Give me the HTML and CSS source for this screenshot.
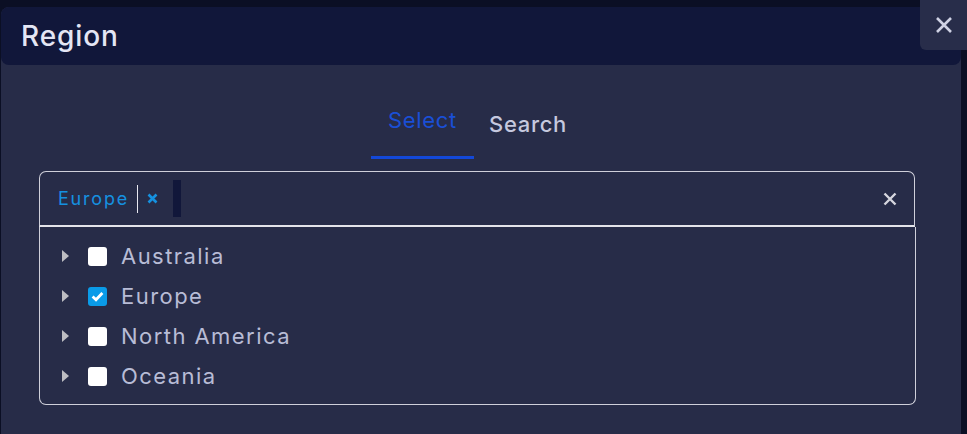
FILE: index.html
```html
<!DOCTYPE html>
<html>
<head>
<meta charset="utf-8">
<link rel="stylesheet" href="styles.css">
</head>
<body>
<div class="modal">
  <div class="modal-header"><h1 class="title">Region</h1></div>
  <div class="tabs">
    <div class="tab tab-active">Select</div>
    <div class="tab">Search</div>
  </div>
  <div class="picker">
    <div class="input">
      <span class="tag">Europe</span>
      <span class="tag-sep"></span>
      <span class="tag-remove">
        <svg width="11" height="11" viewBox="0 0 11 11"><path d="M1.5 1.5L9.5 9.5M9.5 1.5L1.5 9.5" stroke="#1591e0" stroke-width="2.6" stroke-linecap="butt"/></svg>
      </span>
      <span class="cursor"></span>
      <span class="clear">
        <svg width="14" height="14" viewBox="0 0 14 14"><path d="M1.5 1.5L12.5 12.5M12.5 1.5L1.5 12.5" stroke="#d6d6de" stroke-width="2.4"/></svg>
      </span>
    </div>
    <ul class="list">
      <li class="row"><span class="caret"></span><span class="check"></span><span class="label">Australia</span></li>
      <li class="row"><span class="caret"></span><span class="check checked"><svg width="13" height="11" viewBox="0 0 13 11"><path d="M1.6 5.6L5 8.8L11.4 2" stroke="#fff" stroke-width="2.8" fill="none"/></svg></span><span class="label">Europe</span></li>
      <li class="row"><span class="caret"></span><span class="check"></span><span class="label">North America</span></li>
      <li class="row"><span class="caret"></span><span class="check"></span><span class="label">Oceania</span></li>
    </ul>
  </div>
</div>
<button class="close" aria-label="Close">
  <svg width="18" height="18" viewBox="0 0 18 18"><path d="M2 2L16 16M16 2L2 16" stroke="#cfd1e4" stroke-width="2.6"/></svg>
</button>
</body>
</html>
```
FILE: styles.css
```css
html, body {
  margin: 0;
  padding: 0;
  height: 100%;
}
body {
  background: #0b0f24;
  font-family: "Inter", "Open Sans", sans-serif;
  overflow: hidden;
  position: relative;
}
.modal {
  margin: 7px 0 0 1px;
  width: 960px;
  height: 427px;
  background: #272c48;
  border-radius: 8px 8px 0 0;
}
.modal-header {
  height: 58px;
  background: #11173a;
  border-radius: 8px;
  display: flex;
  align-items: center;
  padding-left: 20px;
}
.title {
  margin: 0;
  font-size: 28px;
  font-weight: 500;
  color: #e4e6f4;
  letter-spacing: 0.9px;
}
.tabs {
  display: flex;
  justify-content: center;
  align-items: flex-start;
  height: 94px;
  margin-left: -9px;
}
.tab {
  margin-top: 45px;
  padding: 0 15px;
  font-size: 22px;
  line-height: 28px;
  letter-spacing: 0.7px;
  color: #c5c8de;
  font-weight: 500;
}
.tab-active {
  margin-top: 41px;
  height: 50px;
  padding: 0 17px;
  color: #1a4fd6;
  font-weight: 400;
  border-bottom: 3px solid #1348d8;
}
.picker {
  margin: 12px 0 0 38px;
  width: 876px;
}
.input {
  height: 56px;
  box-sizing: border-box;
  border: 1px solid #cfd0da;
  border-bottom: 2px solid #e4e4ea;
  border-radius: 7px 7px 0 0;
  display: flex;
  align-items: center;
  padding: 0 17px 0 18px;
}
.tag {
  font-size: 18px;
  letter-spacing: 1.8px;
  color: #1591e0;
}
.tag-sep {
  width: 1px;
  height: 28px;
  background: #e8e8f0;
  margin-left: 8px;
}
.tag-remove {
  display: flex;
  margin-left: 9px;
}
.cursor {
  width: 8px;
  height: 37px;
  background: #11173a;
  margin-left: 15px;
}
.clear {
  display: flex;
  margin-left: auto;
}
.list {
  list-style: none;
  margin: 0;
  padding: 9px 0 7px;
  border: 1px solid #cfd0da;
  border-top: none;
  border-radius: 0 0 7px 7px;
  height: 178px;
  box-sizing: border-box;
  width: 877px;
}
.row {
  height: 40px;
  display: flex;
  align-items: center;
  padding-left: 22px;
}
.caret {
  width: 0;
  height: 0;
  border-left: 7px solid #bdbdc2;
  border-top: 6px solid transparent;
  border-bottom: 6px solid transparent;
}
.check {
  width: 19px;
  height: 19px;
  background: #ffffff;
  border-radius: 3px;
  margin-left: 19px;
  display: flex;
  align-items: center;
  justify-content: center;
}
.checked {
  background: #0a9be8;
}
.label {
  margin-left: 14px;
  font-size: 22px;
  letter-spacing: 1.45px;
  color: #b8bcd6;
}
.close {
  position: absolute;
  left: 920px;
  top: 0;
  width: 47px;
  height: 50px;
  border: none;
  padding: 0;
  background: #282d4a;
  border-radius: 0 0 0 6px;
  display: flex;
  align-items: center;
  justify-content: center;
}
```
